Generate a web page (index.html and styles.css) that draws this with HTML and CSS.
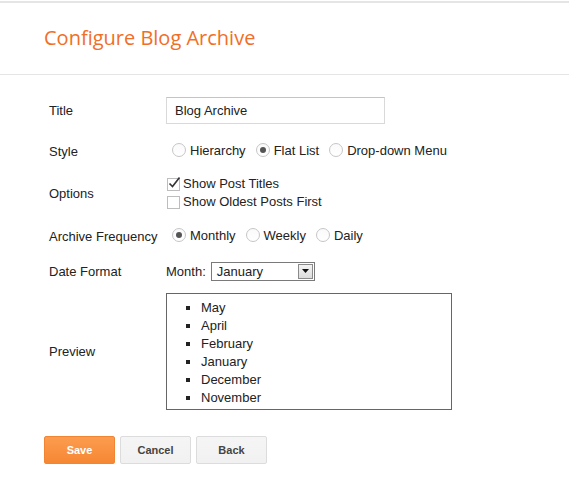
FILE: index.html
```html
<!DOCTYPE html>
<html>
<head>
<meta charset="utf-8">
<link rel="stylesheet" href="styles.css">
</head>
<body>
<div class="topline"></div>
<header class="header"><h1 class="title">Configure Blog Archive</h1></header>
<form class="form">
  <div class="row row-title">
    <div class="label">Title</div>
    <div class="ctrl"><div class="textinput">Blog Archive</div></div>
  </div>
  <div class="row row-style">
    <div class="label">Style</div>
    <div class="ctrl radios">
      <span class="opt"><span class="radio"></span>Hierarchy</span>
      <span class="opt"><span class="radio on"></span>Flat List</span>
      <span class="opt"><span class="radio"></span>Drop-down Menu</span>
    </div>
  </div>
  <div class="row row-options">
    <div class="label">Options</div>
    <div class="ctrl checks">
      <span class="chk-line"><span class="check"><svg class="tick" width="14" height="14" viewBox="0 0 14 14"><path d="M2.5 7.5 L5.5 10.5 L12.5 1.5" fill="none" stroke="#333" stroke-width="1.6"/></svg></span>Show Post Titles</span>
      <span class="chk-line"><span class="check"></span>Show Oldest Posts First</span>
    </div>
  </div>
  <div class="row row-freq">
    <div class="label">Archive Frequency</div>
    <div class="ctrl radios">
      <span class="opt"><span class="radio on"></span>Monthly</span>
      <span class="opt"><span class="radio"></span>Weekly</span>
      <span class="opt"><span class="radio"></span>Daily</span>
    </div>
  </div>
  <div class="row row-date">
    <div class="label">Date Format</div>
    <div class="ctrl date">
      <span class="month-label">Month:</span>
      <span class="select"><span class="select-text">January</span><span class="select-btn"><svg width="7" height="4" viewBox="0 0 7 4"><path d="M0 0 H7 L3.5 4 Z" fill="#111"/></svg></span></span>
    </div>
  </div>
  <div class="row row-preview">
    <div class="label">Preview</div>
    <div class="ctrl">
      <div class="preview">
        <ul class="plist">
          <li>May</li>
          <li>April</li>
          <li>February</li>
          <li>January</li>
          <li>December</li>
          <li>November</li>
        </ul>
      </div>
    </div>
  </div>
  <div class="buttons">
    <button type="button" class="btn btn-save">Save</button>
    <button type="button" class="btn">Cancel</button>
    <button type="button" class="btn">Back</button>
  </div>
</form>
</body>
</html>
```
FILE: styles.css
```css
* { box-sizing: border-box; }
html, body { margin: 0; padding: 0; background: #fff; }
body {
  font-family: "Liberation Sans", Arial, sans-serif;
  font-size: 13px;
  color: #222;
  width: 569px;
  height: 492px;
  overflow: hidden;
}
.topline {
  height: 3px;
  border-top: 1px solid #fff;
  background: #e5e5e5;
}
.header {
  height: 72px;
  border-bottom: 1px solid #e5e5e5;
  padding: 22px 0 0 44px;
}
.title {
  margin: 0;
  font-family: "Open Sans", sans-serif;
  font-weight: 400;
  font-size: 20px;
  line-height: 26px;
  color: #f26e26;
}
.form {
  padding: 22px 0 0 49px;
}
.row {
  display: flex;
  align-items: center;
}
.label {
  width: 117px;
  flex: none;
}
.ctrl { display: flex; align-items: center; }
.row-title { height: 27px; }
.row-style { height: 18px; margin-top: 18px; }
.row-options { height: 36px; margin-top: 15px; }
.row-freq { height: 18px; margin-top: 16px; }
.row-date { height: 18px; margin-top: 17px; }
.row-preview { height: 117px; margin-top: 13px; }

.textinput {
  width: 219px;
  height: 27px;
  border: 1px solid #d9d9d9;
  border-top-color: #c4c4c4;
  padding: 0 8px;
  line-height: 25px;
  color: #222;
}

.radios { margin-left: 6px; }
.opt {
  display: inline-flex;
  align-items: center;
  margin-right: 10px;
  line-height: 18px;
}
.radio {
  width: 14px;
  height: 14px;
  border-radius: 50%;
  border: 1px solid #c6c6c6;
  background: linear-gradient(#fafafa, #fff);
  margin-right: 4px;
  margin-top: -2px;
  position: relative;
  flex: none;
}
.radio.on::after {
  content: "";
  position: absolute;
  left: 3px;
  top: 3px;
  width: 6px;
  height: 6px;
  border-radius: 50%;
  background: #555;
}

.checks {
  flex-direction: column;
  align-items: flex-start;
  margin-left: 1px;
}
.chk-line {
  display: inline-flex;
  align-items: center;
  line-height: 18px;
  height: 18px;
}
.check {
  width: 13px;
  height: 13px;
  border: 1px solid #bdbdbd;
  background: #fff;
  margin-right: 3px;
  position: relative;
  flex: none;
}
.tick {
  position: absolute;
  left: -1px;
  top: -3px;
}

.month-label { margin-right: 5px; }
.select {
  display: inline-flex;
  width: 104px;
  height: 19px;
  border: 1px solid #7a7a7a;
  align-items: stretch;
  background: #fff;
}
.select-text {
  flex: 1;
  padding-left: 5px;
  line-height: 17px;
}
.select-btn {
  width: 15px;
  margin: 1px;
  border: 1px solid #8a8a8a;
  background: linear-gradient(#f4f4f4, #dcdcdc);
  display: flex;
  align-items: center;
  justify-content: center;
}

.preview {
  width: 286px;
  height: 117px;
  border: 1px solid #666;
  padding-top: 5px;
}
.plist {
  margin: 0;
  padding-left: 34px;
  list-style: square;
}
.plist li {
  line-height: 18px;
}

.buttons {
  display: flex;
  gap: 5px;
  margin-top: 26px;
  margin-left: -5px;
}
.btn {
  width: 71px;
  height: 28px;
  border: 1px solid #dcdcdc;
  border-radius: 2px;
  background: linear-gradient(#f5f5f5, #f1f1f1);
  color: #444;
  font-family: "Liberation Sans", Arial, sans-serif;
  font-size: 11px;
  font-weight: bold;
  padding: 0;
}
.btn-save {
  background: linear-gradient(#fc9c4f, #f68733);
  border-color: #f28533;
  color: #fff;
}
```
